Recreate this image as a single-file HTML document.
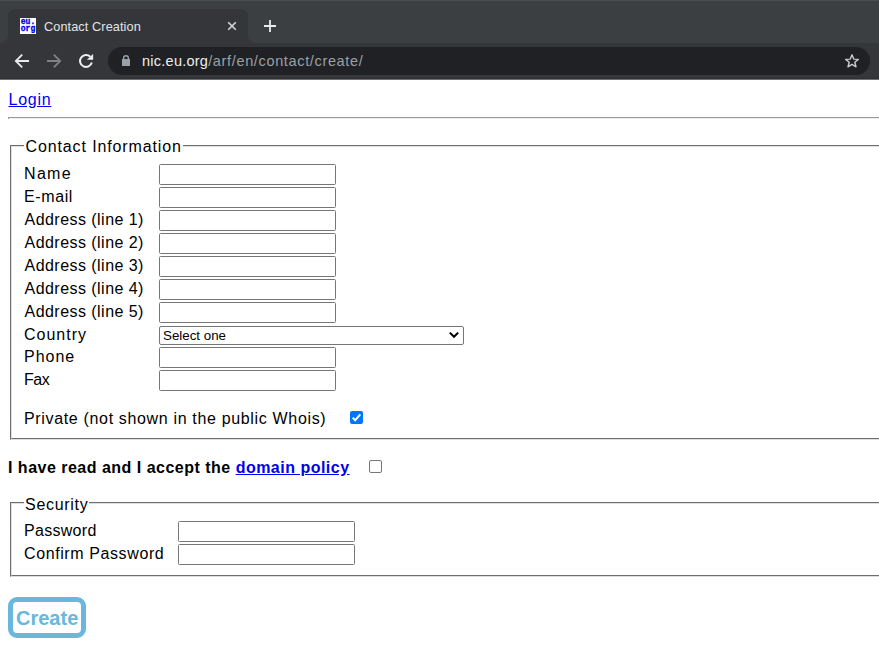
<!DOCTYPE html>
<html><head><meta charset="utf-8">
<style>
html,body{margin:0;padding:0;width:879px;height:657px;overflow:hidden;background:#fff;}
body{position:relative;font-family:"Liberation Sans",sans-serif;}
.a{position:absolute;}
#topline{left:0;top:0;width:879px;height:1px;background:#4b4c4e;}
#frame{left:0;top:1px;width:879px;height:42px;background:#3c3f42;}
#tab{left:8px;top:9px;width:240px;height:34px;background:#35363a;border-radius:8px 8px 0 0;}
#flL{left:0;top:35px;width:8px;height:8px;background:radial-gradient(circle at 0 0,#3c3f42 7.5px,#35363a 8.5px);}
#flR{left:248px;top:35px;width:8px;height:8px;background:radial-gradient(circle at 100% 0,#3c3f42 7.5px,#35363a 8.5px);}
#toolbar{left:0;top:43px;width:879px;height:36px;background:#35363a;}
#tbline{left:0;top:78px;width:879px;height:1px;background:#2f3033;}
#tbline2{left:0;top:79px;width:879px;height:1px;background:#6e6f71;}
#omni{left:108px;top:47px;width:762px;height:28px;background:#202124;border-radius:14px;}
.t16{font-size:16px;line-height:18px;white-space:nowrap;color:#000;}
.inp{box-sizing:border-box;width:177px;height:21px;border:1px solid #767676;border-radius:1.5px;background:#fff;}
.fs{box-sizing:border-box;border-top:1px solid #6e6e6e;border-left:1px solid #6e6e6e;border-bottom:1px solid #dedede;}
.fsi{box-sizing:border-box;position:absolute;left:0;top:0;right:0;bottom:0;border-top:1px solid #dedede;border-left:1px solid #dedede;border-bottom:1px solid #6e6e6e;}
</style></head><body>
<div class="a" id="topline"></div>
<div class="a" id="frame"></div>
<div class="a" id="tab"></div>
<div class="a" id="toolbar"></div>
<div class="a" id="flL"></div>
<div class="a" id="flR"></div>
<div class="a" id="tbline"></div>
<div class="a" id="tbline2"></div>
<!-- favicon -->
<svg class="a" style="left:20px;top:18px" width="16" height="16" viewBox="0 0 16 16">
<rect width="16" height="16" fill="#fff"/>
<text x="0.8" y="6" font-family="Liberation Mono" font-weight="bold" font-size="9.6" fill="#0000f0" stroke="#0000f0" stroke-width="0.35" textLength="14.4" lengthAdjust="spacingAndGlyphs">eu.</text>
<text x="0.8" y="13" font-family="Liberation Mono" font-weight="bold" font-size="9.6" fill="#0000f0" stroke="#0000f0" stroke-width="0.35" textLength="14.4" lengthAdjust="spacingAndGlyphs">org</text>
</svg>
<div class="a" style="left:44px;top:19px;font-size:12.7px;line-height:16px;letter-spacing:0.1px;color:#e3e5e8;white-space:nowrap;">Contact Creation</div>
<!-- close x -->
<svg class="a" style="left:226px;top:20px" width="12" height="12" viewBox="0 0 12 12"><path d="M2.2 2.2L9.8 9.8M9.8 2.2L2.2 9.8" stroke="#d5d6d8" stroke-width="1.6"/></svg>
<!-- plus -->
<svg class="a" style="left:262px;top:18px" width="16" height="16" viewBox="0 0 16 16"><path d="M8 2V14M2 8H14" stroke="#e8eaed" stroke-width="1.8"/></svg>
<!-- back -->
<svg class="a" style="left:14px;top:53px" width="16" height="16" viewBox="0 0 16 16"><path d="M15 8H2.6M8.2 1.6L1.8 8L8.2 14.4" fill="none" stroke="#e8eaed" stroke-width="1.8"/></svg>
<!-- forward -->
<svg class="a" style="left:46px;top:53px" width="16" height="16" viewBox="0 0 16 16"><path d="M1 8H13.4M7.8 1.6L14.2 8L7.8 14.4" fill="none" stroke="#7f8184" stroke-width="1.8"/></svg>
<!-- reload -->
<svg class="a" style="left:78px;top:53px" width="16" height="16" viewBox="0 0 16 16"><path d="M13.8 9.55A6 6 0 1 1 12.24 3.76" fill="none" stroke="#eceef0" stroke-width="2"/><path d="M8.9 6.7L15.1 6.7L15.1 0.9Z" fill="#eceef0"/></svg>
<div class="a" id="omni"></div>
<!-- lock -->
<svg class="a" style="left:120px;top:53px" width="12" height="15" viewBox="0 0 12 15"><rect x="2" y="6" width="8" height="7" fill="#9aa0a6"/><path d="M3.6 6.5V5a2.4 2.3 0 0 1 4.8 0V6.5" fill="none" stroke="#9aa0a6" stroke-width="1.4"/></svg>
<div class="a" style="left:142px;top:52px;font-size:14.5px;line-height:18px;white-space:nowrap;color:#9aa0a6;letter-spacing:0.65px;"><span style="color:#eceef0;letter-spacing:0.25px;">nic.eu.org</span>/arf/en/contact/create/</div>
<!-- star -->
<svg class="a" style="left:844px;top:53px" width="16" height="16" viewBox="0 0 16 16"><path d="M8 1.8L9.75 6.1L14.3 6.35L10.8 9.25L12 13.8L8 11.3L4 13.8L5.2 9.25L1.7 6.35L6.25 6.1Z" fill="none" stroke="#c8cacc" stroke-width="1.4" stroke-linejoin="round"/></svg>

<!-- page -->
<div class="a t16" style="left:8.5px;top:91px;letter-spacing:0.75px;color:#0000ee;text-decoration:underline;">Login</div>
<div class="a" style="left:8px;top:117px;width:880px;height:1px;background:#9a9a9a;"></div>
<div class="a" style="left:8px;top:118px;width:880px;height:1px;background:#eeeeee;"></div>
<div class="a" style="left:8px;top:118px;width:1px;height:1px;background:#9a9a9a;"></div>

<div class="a fs" style="left:10px;top:145px;width:900px;height:295px;"><div class="fsi"></div></div>
<div class="a" style="left:24px;top:140px;width:159px;height:10px;background:#fff;"></div>
<div class="a t16" style="left:25.5px;top:138px;letter-spacing:0.88px;">Contact Information</div>

<div class="a t16" style="left:24px;top:165px;letter-spacing:1.33px;">Name</div>
<div class="a t16" style="left:24px;top:188px;letter-spacing:0.6px;">E-mail</div>
<div class="a t16" style="left:24.5px;top:211px;letter-spacing:0.46px;">Address (line 1)</div>
<div class="a t16" style="left:24.5px;top:234px;letter-spacing:0.46px;">Address (line 2)</div>
<div class="a t16" style="left:24.5px;top:257px;letter-spacing:0.46px;">Address (line 3)</div>
<div class="a t16" style="left:24.5px;top:280px;letter-spacing:0.46px;">Address (line 4)</div>
<div class="a t16" style="left:24.5px;top:303px;letter-spacing:0.46px;">Address (line 5)</div>
<div class="a t16" style="left:24px;top:326px;letter-spacing:1px;">Country</div>
<div class="a t16" style="left:24px;top:348px;letter-spacing:1px;">Phone</div>
<div class="a t16" style="left:24px;top:371px;letter-spacing:-0.5px;">Fax</div>

<div class="a inp" style="left:159px;top:164px;"></div>
<div class="a inp" style="left:159px;top:187px;"></div>
<div class="a inp" style="left:159px;top:210px;"></div>
<div class="a inp" style="left:159px;top:233px;"></div>
<div class="a inp" style="left:159px;top:256px;"></div>
<div class="a inp" style="left:159px;top:279px;"></div>
<div class="a inp" style="left:159px;top:302px;"></div>
<div class="a" style="box-sizing:border-box;left:159px;top:326px;width:305px;height:19px;border:1px solid #767676;border-radius:2px;background:#fff;"></div>
<div class="a" style="left:163px;top:328px;font-size:13.333px;line-height:15px;color:#000;white-space:nowrap;">Select one</div>
<svg class="a" style="left:448px;top:330px" width="12" height="10" viewBox="0 0 12 10"><path d="M1.8 2.6L6 6.8L10.2 2.6" fill="none" stroke="#000" stroke-width="2"/></svg>
<div class="a inp" style="left:159px;top:347px;"></div>
<div class="a inp" style="left:159px;top:370px;"></div>

<div class="a t16" style="left:24px;top:410px;letter-spacing:0.66px;">Private (not shown in the public Whois)</div>
<div class="a" style="left:350px;top:411px;width:13px;height:13px;background:#0075ff;border-radius:2px;"></div>
<svg class="a" style="left:350px;top:411px" width="13" height="13" viewBox="0 0 13 13"><path d="M2.7 6.6L5.2 9.2L10.3 3.4" fill="none" stroke="#fff" stroke-width="2"/></svg>

<div class="a t16" style="left:8px;top:459px;font-weight:bold;letter-spacing:0.49px;">I have read and I accept the <span style="color:#0000ee;text-decoration:underline;">domain policy</span></div>
<div class="a" style="box-sizing:border-box;left:369px;top:460px;width:13px;height:13px;border:1px solid #767676;border-radius:2px;background:#fff;"></div>

<div class="a fs" style="left:10px;top:502px;width:900px;height:75px;"><div class="fsi"></div></div>
<div class="a" style="left:24px;top:497px;width:65px;height:10px;background:#fff;"></div>
<div class="a t16" style="left:25px;top:496px;letter-spacing:0.71px;">Security</div>
<div class="a t16" style="left:24px;top:522px;letter-spacing:0.29px;">Password</div>
<div class="a t16" style="left:24px;top:545px;letter-spacing:0.6px;">Confirm Password</div>
<div class="a inp" style="left:178px;top:521px;"></div>
<div class="a inp" style="left:178px;top:544px;"></div>

<div class="a" style="box-sizing:border-box;left:8px;top:597px;width:78px;height:41px;border:5px solid #69b7dc;border-radius:9px;background:#fff;"></div>
<div class="a" style="left:16px;top:607px;font-size:20px;line-height:23px;font-weight:bold;color:#69b7dc;white-space:nowrap;">Create</div>
</body></html>
